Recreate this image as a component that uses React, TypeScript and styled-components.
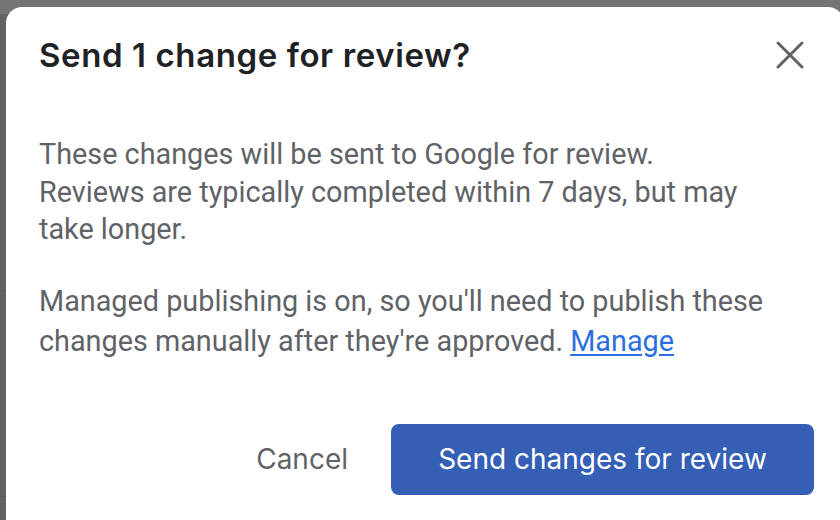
import React from "react";
import styled, { createGlobalStyle } from "styled-components";

const Global = createGlobalStyle`
  html, body { margin: 0; padding: 0; }
  body { width: 840px; height: 520px; overflow: hidden; background: #606263; }
`;

const Backdrop = styled.div`
  position: relative;
  width: 840px;
  height: 520px;
  overflow: hidden;
  background: #606263;
`;

const PageHeader = styled.div`
  height: 14px;
  background: #747474;
`;

const PageRule = styled.div<{ $top: number }>`
  height: 1px;
  margin-top: ${(p) => p.$top}px;
  background: #555757;
`;

const Dialog = styled.div`
  position: absolute;
  left: 6px;
  top: 7px;
  width: 838px;
  height: 540px;
  box-sizing: border-box;
  background: #ffffff;
  border-radius: 16px;
  padding: 0 30px 0 33px;
  display: flex;
  flex-direction: column;
`;

const Header = styled.div`
  display: flex;
  align-items: center;
  justify-content: space-between;
  height: 96px;
`;

const Title = styled.h1`
  margin: 0;
  font-family: "Inter", "Open Sans", sans-serif;
  font-weight: 600;
  font-size: 33px;
  letter-spacing: 0.6px;
  color: #202124;
  line-height: 40px;
`;

const CloseButton = styled.button`
  width: 48px;
  height: 48px;
  border: 0;
  background: transparent;
  padding: 0;
  display: flex;
  align-items: center;
  justify-content: center;
  cursor: pointer;
`;

const Body = styled.div`
  display: flex;
  flex-direction: column;
  gap: 32px;
  padding-top: 33px;
`;

const Paragraph = styled.p<{ $lineHeight: number }>`
  margin: 0;
  font-family: "Roboto", "Liberation Sans", sans-serif;
  font-size: 28.8px;
  line-height: ${(p) => p.$lineHeight}px;
  color: #5f6368;
`;

const Link = styled.a`
  color: #2a6fe0;
  text-decoration: underline;
  text-underline-offset: 3px;
`;

const Actions = styled.div`
  display: flex;
  justify-content: flex-end;
  align-items: center;
  gap: 43px;
  margin-top: 63px;
`;

const TextButton = styled.button`
  border: 0;
  background: transparent;
  padding: 0;
  font-family: "Inter", "Open Sans", sans-serif;
  font-size: 28px;
  color: #5f6368;
  cursor: pointer;
`;

const PrimaryButton = styled.button`
  width: 423px;
  height: 71px;
  border: 0;
  border-radius: 8px;
  background: #355eb5;
  color: #ffffff;
  font-family: "Inter", "Open Sans", sans-serif;
  font-size: 28px;
  cursor: pointer;
`;

export default function App() {
  return (
    <>
      <Global />
      <Backdrop>
        <PageHeader />
        <PageRule $top={276} />
        <PageRule $top={205} />
        <Dialog role="dialog">
          <Header>
            <Title>Send 1 change for review?</Title>
            <CloseButton aria-label="Close">
              <svg width="30" height="30" viewBox="0 0 30 30">
                <path
                  d="M3 3 L27 27 M27 3 L3 27"
                  stroke="#5f6368"
                  strokeWidth="3"
                  strokeLinecap="round"
                />
              </svg>
            </CloseButton>
          </Header>
          <Body>
            <Paragraph $lineHeight={37.5}>
              These changes will be sent to Google for review.
              <br />
              Reviews are typically completed within 7 days, but may
              <br />
              take longer.
            </Paragraph>
            <Paragraph $lineHeight={40}>
              Managed publishing is on, so you'll need to publish these
              <br />
              changes manually after they're approved. <Link href="#">Manage</Link>
            </Paragraph>
          </Body>
          <Actions>
            <TextButton>Cancel</TextButton>
            <PrimaryButton>Send changes for review</PrimaryButton>
          </Actions>
        </Dialog>
      </Backdrop>
    </>
  );
}
